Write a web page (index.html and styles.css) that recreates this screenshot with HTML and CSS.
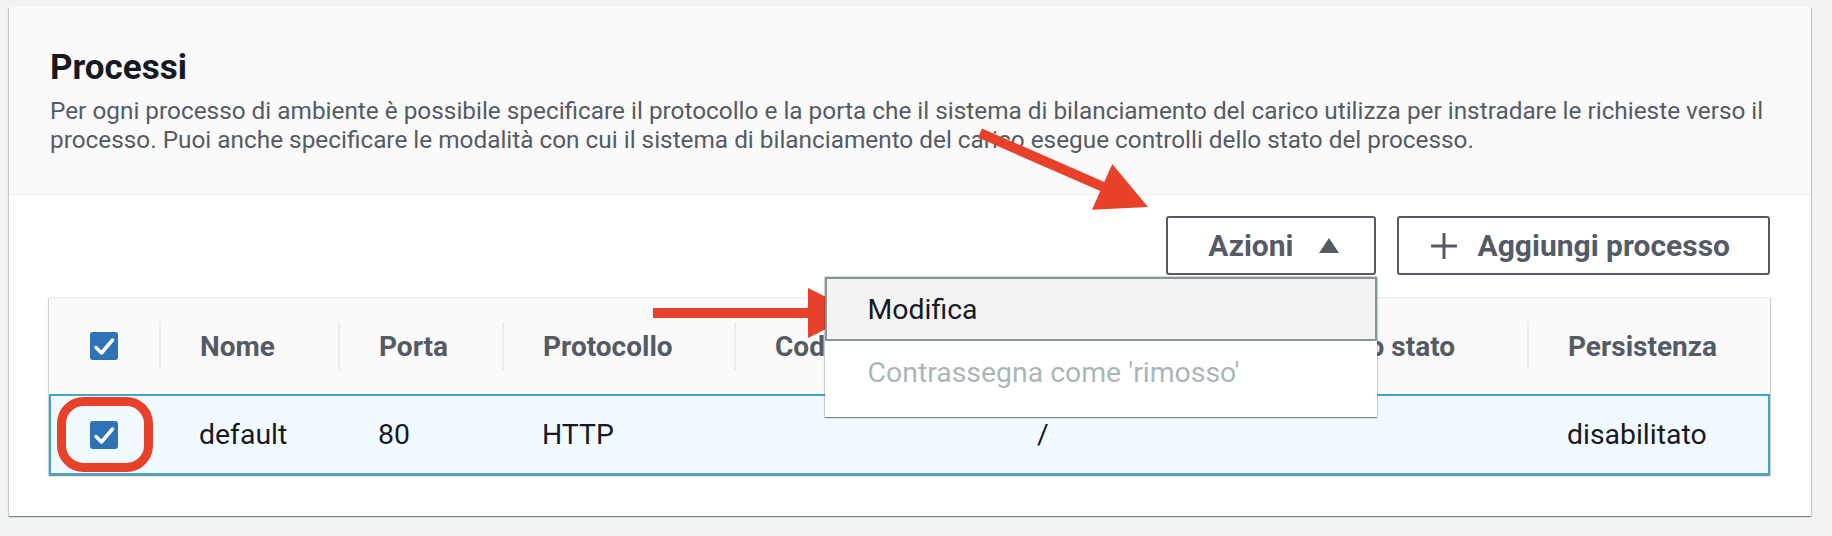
FILE: index.html
```html
<!DOCTYPE html>
<html lang="it">
<head>
<meta charset="utf-8">
<title>Processi</title>
<link rel="stylesheet" href="styles.css">
</head>
<body>
<div class="page">
  <section class="card">
    <header class="card-header">
      <h2 class="title">Processi</h2>
      <p class="desc">Per ogni processo di ambiente è possibile specificare il protocollo e la porta che il sistema di bilanciamento del carico utilizza per instradare le richieste verso il<br>processo. Puoi anche specificare le modalità con cui il sistema di bilanciamento del carico esegue controlli dello stato del processo.</p>
    </header>
    <div class="card-body">
      <div class="toolbar">
        <div class="menu-wrap">
          <button class="btn btn-actions">Azioni <span class="caret"></span></button>
          <ul class="menu">
            <li class="active">Modifica</li>
            <li class="disabled">Contrassegna come 'rimosso'</li>
          </ul>
        </div>
        <button class="btn btn-add">
          <svg class="plus" width="28" height="28" viewBox="0 0 28 28"><path d="M14 1v26M1 14h26" stroke="#545b64" stroke-width="3" fill="none"/></svg>
          Aggiungi processo
        </button>
      </div>
      <div class="table">
        <div class="grid thead">
          <div class="th check"><span class="cb"><svg width="28" height="28" viewBox="0 0 28 28"><path d="M6 15.5l5.5 5.5L22.5 8" stroke="#fff" stroke-width="3.5" fill="none" stroke-linecap="round" stroke-linejoin="round"/></svg></span></div>
          <div class="th">Nome</div>
          <div class="th">Porta</div>
          <div class="th">Protocollo</div>
          <div class="th">Codice HTTP</div>
          <div class="th">Percorso del controllo dello stato</div>
          <div class="th">Persistenza</div>
        </div>
        <div class="grid trow">
          <div class="td check"><span class="cb"><svg width="28" height="28" viewBox="0 0 28 28"><path d="M6 15.5l5.5 5.5L22.5 8" stroke="#fff" stroke-width="3.5" fill="none" stroke-linecap="round" stroke-linejoin="round"/></svg></span></div>
          <div class="td">default</div>
          <div class="td">80</div>
          <div class="td">HTTP</div>
          <div class="td"></div>
          <div class="td">/</div>
          <div class="td">disabilitato</div>
        </div>
      </div>
    </div>
  </section>
</div>
<svg class="annot" width="1832" height="536" viewBox="0 0 1832 536">
  <line x1="980" y1="133" x2="1108" y2="189" stroke="#e8412a" stroke-width="10"/>
  <polygon points="1148,207 1092,209.7 1112.3,163.9" fill="#e8412a"/>
  <rect x="653" y="308" width="160" height="10" fill="#e8412a"/>
  <polygon points="808,288 858,313 808,338" fill="#e8412a"/>
  <rect x="61.5" y="401.5" width="87" height="66" rx="22" fill="none" stroke="#e8412a" stroke-width="9"/>
</svg>
</body>
</html>
```
FILE: styles.css
```css
* { box-sizing: border-box; }
body {
  margin: 0;
  width: 1832px;
  height: 536px;
  overflow: hidden;
  position: relative;
  background: #f2f3f3;
  font-family: Roboto, "Liberation Sans", Arial, sans-serif;
  color: #16191f;
}
.page { padding: 7px 21px 0 9px; }
.card {
  background: #fff;
  box-shadow: 0 1px 1px 0 rgba(0,28,36,.3), 1px 1px 1px 0 rgba(0,28,36,.15), -1px 1px 1px 0 rgba(0,28,36,.15);
}
.card-header {
  background: #fafafa;
  border-bottom: 1px solid #eaeded;
  padding: 40px 41px 40px 41px;
}
.title {
  margin: 0;
  font-size: 35px;
  line-height: 42px;
  font-weight: 700;
  color: #16191f;
}
.desc {
  margin: 7px 0 0;
  font-size: 24.35px;
  line-height: 29px;
  color: #545b64;
  white-space: nowrap;
}
.card-body { padding: 21px 41px 41px 40px; }
.toolbar {
  display: flex;
  justify-content: flex-end;
  gap: 21px;
  margin-bottom: 22px;
}
.menu-wrap { position: relative; }
.btn {
  height: 59px;
  border: 2px solid #545b64;
  border-radius: 3px;
  background: #fff;
  color: #545b64;
  font-family: inherit;
  font-size: 30px;
  font-weight: 700;
  display: flex;
  align-items: center;
}
.btn-actions { padding: 0 35px 0 40px; gap: 25px; }
.caret {
  width: 0;
  height: 0;
  border-left: 10px solid transparent;
  border-right: 10px solid transparent;
  border-bottom: 15px solid #545b64;
}
.btn-add { padding: 0 38px 0 31px; gap: 20px; }
.plus { display: block; }
.menu {
  position: absolute;
  top: calc(100% + 1px);
  right: -1px;
  width: 552px;
  z-index: 2;
  list-style: none;
  margin: 0;
  padding: 0 0 14px;
  background: #fff;
  border-top: 1px solid #d5dbdb;
  box-shadow: 0 1px 1px 0 rgba(0,28,36,.3), 1px 1px 1px 0 rgba(0,28,36,.15), -1px 1px 1px 0 rgba(0,28,36,.15);
  font-size: 28.4px;
}
.menu li {
  height: 62px;
  display: flex;
  align-items: center;
  padding-left: 43px;
  white-space: nowrap;
}
.menu li.active {
  height: 64px;
  background: #f2f3f3;
  border: 2px solid #879596;
  padding-left: 41px;
  color: #16191f;
}
.menu li.disabled { color: #aab7b8; }
.table {
  background: #fff;
  box-shadow: 0 1px 1px 0 rgba(0,28,36,.3), 1px 1px 1px 0 rgba(0,28,36,.15), -1px 1px 1px 0 rgba(0,28,36,.15);
}
.grid {
  display: grid;
  grid-template-columns: 110px 179px 164px 232px 263px 530px 243px;
  align-items: center;
}
.thead {
  height: 97px;
  background: #fafafa;
  border-top: 1px solid #eaeded;
}
.th {
  height: 48px;
  display: flex;
  align-items: center;
  border-left: 2px solid #eaeded;
  padding-left: 39px;
  font-size: 28px;
  font-weight: 700;
  color: #545b64;
  white-space: nowrap;
  overflow: hidden;
}
.th.check { border-left: none; padding-left: 41px; }
.trow {
  height: 81px;
  border: 2px solid #44a4d0;
  background: #f1faff;
  grid-template-columns: 108px 179px 164px 232px 263px 530px 241px;
}
.td {
  padding-left: 40px;
  font-size: 28.4px;
  color: #16191f;
  white-space: nowrap;
}
.td.check { padding-left: 39px; display: flex; }
.cb {
  display: block;
  width: 28px;
  height: 28px;
  border-radius: 3px;
  background: #2f72b6;
}
.cb svg { display: block; }
.annot {
  position: absolute;
  left: 0;
  top: 0;
  pointer-events: none;
}
```
